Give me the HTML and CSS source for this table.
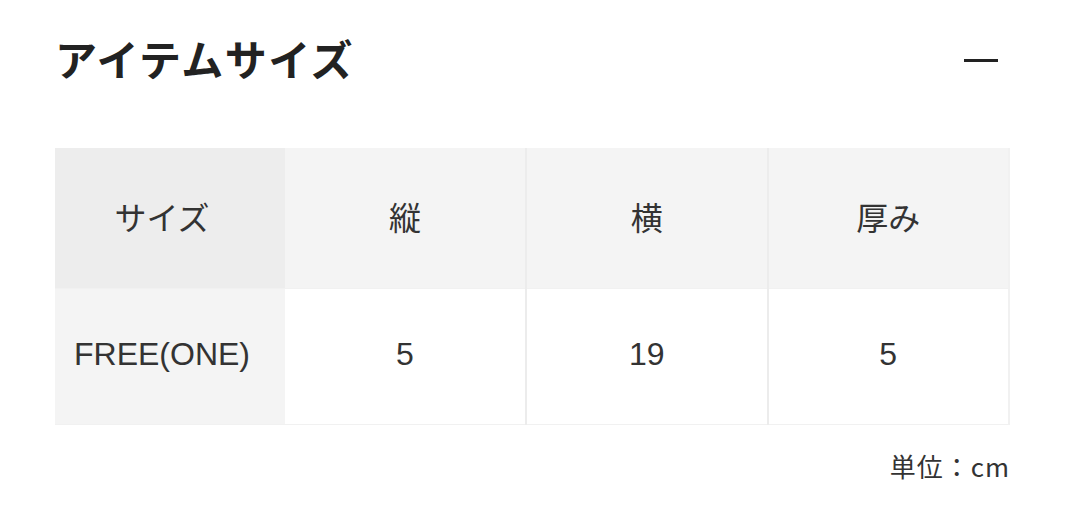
FILE: index.html
```html
<!DOCTYPE html>
<html lang="ja">
<head>
<meta charset="utf-8">
<link rel="stylesheet" href="styles.css">
</head>
<body>
<section class="panel">
  <header class="head">
    <h2 class="title">アイテムサイズ</h2>
    <span class="toggle"></span>
  </header>
  <table class="size-table">
    <thead>
      <tr>
        <th class="c-first">サイズ</th>
        <th class="c-sep0">縦</th>
        <th>横</th>
        <th>厚み</th>
      </tr>
    </thead>
    <tbody>
      <tr>
        <td class="c-first">FREE(ONE)</td>
        <td class="c-sep0">5</td>
        <td>19</td>
        <td>5</td>
      </tr>
    </tbody>
  </table>
  <p class="unit">単位：cm</p>
</section>
</body>
</html>
```
FILE: styles.css
```css
html, body {
  margin: 0;
  padding: 0;
  background: #fff;
}
body {
  font-family: "Noto Sans CJK JP", "Noto Sans", sans-serif;
  color: #222;
}
.panel {
  padding: 0 70px 0 55px;
}
.head {
  display: flex;
  align-items: center;
  justify-content: space-between;
  height: 120px;
}
.title {
  margin: 0;
  font-size: 42px;
  font-weight: 700;
  letter-spacing: 1.5px;
  color: #222;
  line-height: 1;
  position: relative;
  top: -2px;
}
.toggle {
  display: block;
  width: 34px;
  height: 3px;
  background: #222;
  margin-right: 12px;
}
.size-table {
  width: 955px;
  border-collapse: collapse;
  margin-top: 28px;
  table-layout: fixed;
}
.size-table th,
.size-table td {
  text-align: center;
  font-weight: 400;
  color: #333;
  border-left: 2px solid #ececec;
  border-bottom: 1px solid #f1f1f1;
  padding: 0 0 5px;
}
.size-table th {
  height: 135px;
  background: #f4f4f4;
  font-family: "Noto Sans CJK JP", sans-serif;
  font-size: 32px;
}
.size-table td {
  height: 130px;
  background: #fff;
  font-family: "Liberation Sans", "Noto Sans CJK JP", sans-serif;
  font-size: 32px;
}
.size-table th:last-child,
.size-table td:last-child {
  border-right: 2px solid #f1f1f1;
}
.size-table .c-first {
  width: 214px;
  border-left: none;
  padding-right: 16px;
}
.size-table .c-sep0 {
  border-left: none;
  width: 240px;
}
.size-table th.c-first {
  background: #ededed;
}
.size-table td.c-first {
  background: #f4f4f4;
}
.unit {
  margin: 22px 0 0;
  text-align: right;
  font-size: 26px;
  color: #333;
  letter-spacing: 1px;
}
```
